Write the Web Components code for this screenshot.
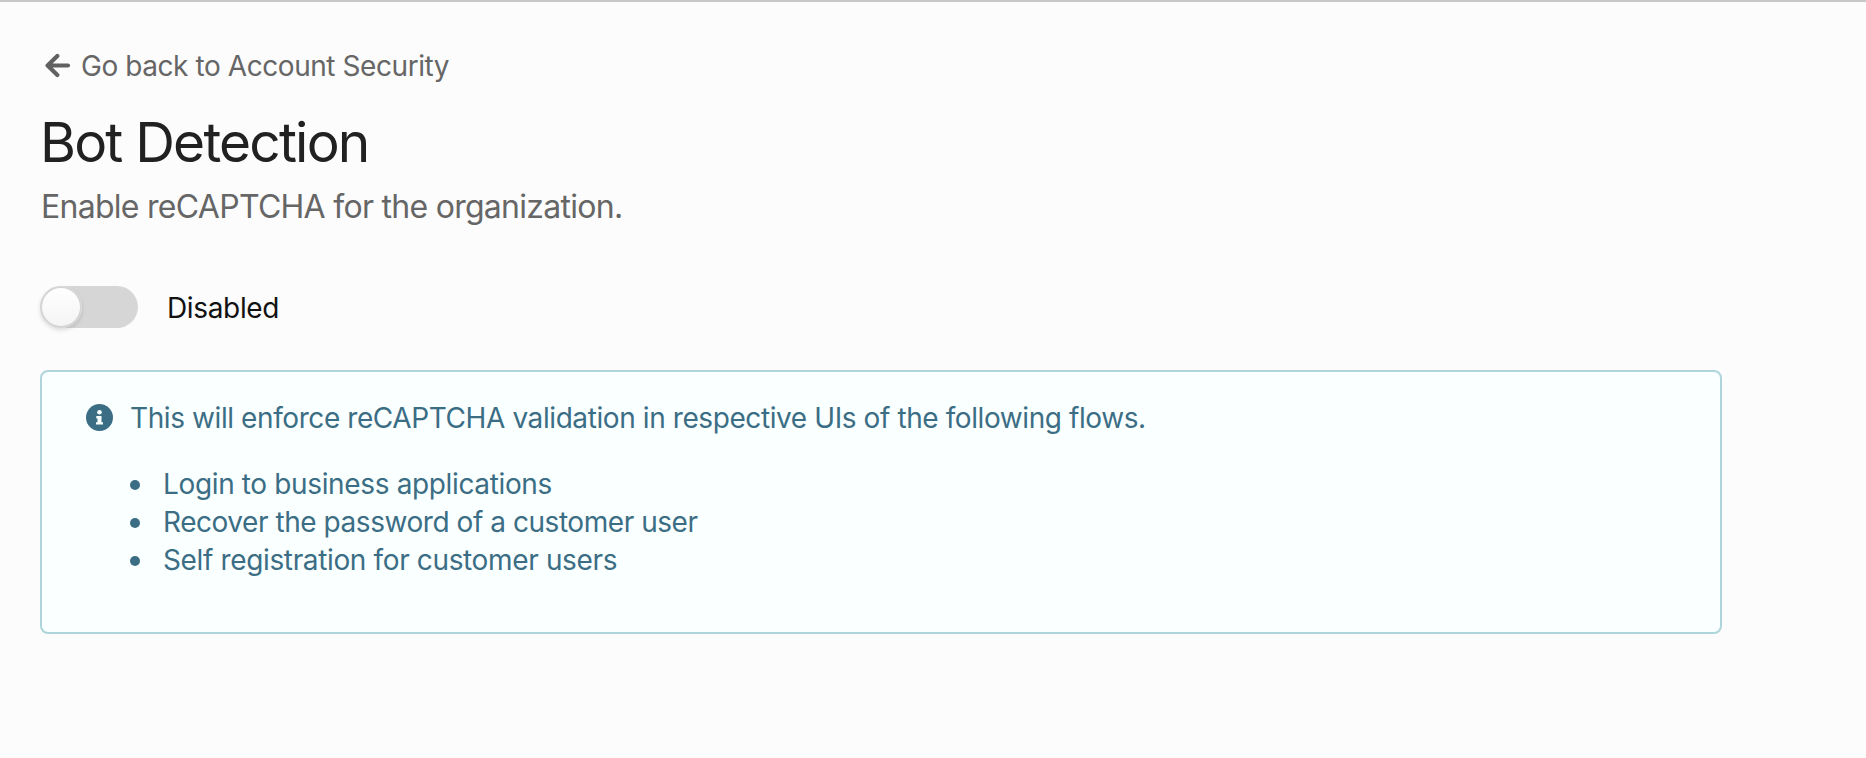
<!DOCTYPE html>
<html lang="en"><head><meta charset="utf-8"><title>Bot Detection</title>
<style>html,body{margin:0;height:100%}body{background:#fcfcfc;font-family:Inter,sans-serif;font-weight:430;overflow:hidden}</style></head><body>
<security-page></security-page>
<script>
const define=(name,html)=>customElements.define(name,class extends HTMLElement{constructor(){super();this.attachShadow({mode:'open'}).innerHTML=html;}});
define('back-link',`<style>:host{display:flex;align-items:center;height:36px;gap:10px;padding-left:5px;color:#666;font-size:28px;line-height:36px}svg{display:block}span{white-space:nowrap;letter-spacing:-.43px}</style>
<svg width="26" height="26" viewBox="0 0 26 26" fill="none" stroke="#616161" stroke-width="4.200" stroke-linecap="round" stroke-linejoin="round"><path d="M12.300 3 2.600 12.500l9.700 9.500M3.500 12.500H23"/></svg><span><slot></slot></span>`);
define('page-heading',`<style>:host{display:block;margin-top:24px;padding-left:1px}h1{font-size:55px;line-height:68px;font-weight:430;letter-spacing:-1.8px;color:#212121;margin:0 0 0 -1px;white-space:nowrap}p{font-size:32px;line-height:42px;letter-spacing:-.72px;color:#666;margin:10px 0 0;white-space:nowrap}</style><h1><slot name="title"></slot></h1><p><slot name="subtitle"></slot></p>`);
define('toggle-switch',`<style>:host{display:flex;align-items:center;gap:29px;height:42px;margin-top:58px;font-size:28px;color:#111}.track{width:98px;height:42px;border-radius:21px;background:#d6d6d6}.knob{box-sizing:border-box;width:42px;height:42px;border-radius:50%;background:linear-gradient(#fff,#f4f4f4);box-shadow:0 2px 4px #0002,0 0 0 2px #d4d4d5 inset}span{letter-spacing:-.35px;padding-top:1px}</style><div class="track"><div class="knob"></div></div><span><slot></slot></span>`);
define('info-message',`<style>:host{display:block;box-sizing:border-box;width:1682px;height:264px;margin-top:42px;border:2px solid #afd5dc;border-radius:8px;background:#faffff;color:#3b6e85;padding:27px 44px;font-size:28px;line-height:38px}.head{display:flex;gap:16px;align-items:center;letter-spacing:-.41px}ul{list-style:none;margin:28px 0 0;padding-left:44px;letter-spacing:-.36px}li{display:flex;align-items:center;gap:23px}li:nth-child(2){letter-spacing:-.45px}li::before{content:"";width:10px;height:10px;border-radius:50%;background:currentColor;margin-top:1px}svg{display:block}</style><div class="head"><svg width="28" height="28" viewBox="0 0 28 28"><circle cx="13.500" cy="13.500" r="13.500" fill="#3b6e85"/><circle cx="13.500" cy="8.200" r="2.300" fill="#faffff"/><path d="M10.300 12h5.200v6.200h1.500v2.400h-7v-2.400H11.500v-3.800h-1.200z" fill="#faffff"/></svg><span><slot name="message"></slot></span></div><ul><li>Login to business applications</li><li>Recover the password of a customer user</li><li>Self registration for customer users</li></ul>`);
define('security-page',`<style>:host{display:block;box-sizing:border-box;height:758px;border-top:2px solid #c8c8c8;padding:46px 0 0 40px}</style><back-link>Go back to Account Security</back-link><page-heading><span slot="title">Bot Detection</span><span slot="subtitle">Enable reCAPTCHA for the organization.</span></page-heading><toggle-switch>Disabled</toggle-switch><info-message><span slot="message">This will enforce reCAPTCHA validation in respective UIs of the following flows.</span></info-message>`);
</script></body></html>
